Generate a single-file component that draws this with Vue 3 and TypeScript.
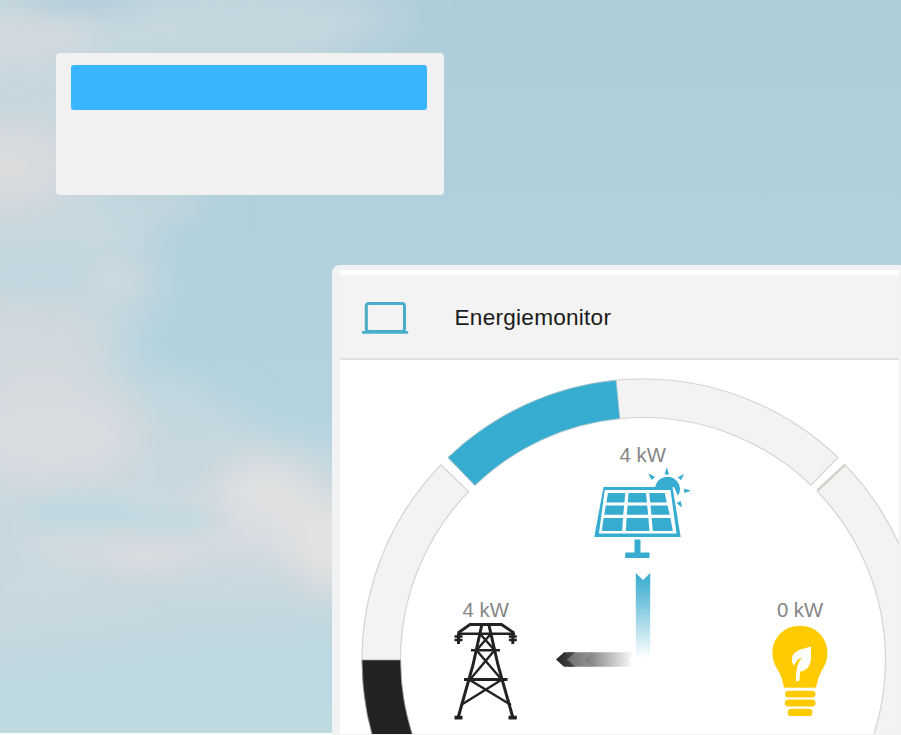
<script setup lang="ts">
interface Segment { from: number; to: number; kind: string }
interface Reading { x: number; y: number; label: string }

const cx = 643
const cy = 660
const outer = 281
const inner = 242.5

function point(radius: number, deg: number): string {
  const a = (deg * Math.PI) / 180
  return `${(cx + radius * Math.cos(a)).toFixed(2)} ${(cy + radius * Math.sin(a)).toFixed(2)}`
}

function ring(s: Segment): string {
  return `M${point(outer, s.from)}A${outer} ${outer} 0 0 1 ${point(outer, s.to)}L${point(inner, s.to)}A${inner} ${inner} 0 0 0 ${point(inner, s.from)}Z`
}

const segments: Segment[] = [
  { from: 136, to: 224, kind: 'track' },
  { from: 136, to: 180, kind: 'grid' },
  { from: 226.1, to: 313.9, kind: 'track' },
  { from: 226.1, to: 264.5, kind: 'solar' },
  { from: 316, to: 404, kind: 'track' },
]

const readings: Reading[] = [
  { x: 642.7, y: 462, label: '4 kW' },
  { x: 485.7, y: 617, label: '4 kW' },
  { x: 800, y: 617, label: '0 kW' },
]
</script>

<template>
  <div class="page">
    <svg class="sky" viewBox="0 0 901 733" preserveAspectRatio="none" aria-hidden="true">
      <defs>
        <linearGradient id="air" x1="0" y1="0" x2="0" y2="1">
          <stop offset="0" stop-color="#aecdd9" />
          <stop offset=".5" stop-color="#b3d3de" />
          <stop offset=".8" stop-color="#bad7e0" />
          <stop offset="1" stop-color="#bfd9e1" />
        </linearGradient>
        <filter id="haze" x="-60%" y="-60%" width="220%" height="220%"><feGaussianBlur stdDeviation="20" /></filter>
        <filter id="wisp" x="-60%" y="-80%" width="220%" height="260%"><feGaussianBlur stdDeviation="10" /></filter>
      </defs>
      <rect width="901" height="734" fill="url(#air)" />
      <g filter="url(#haze)">
        <path d="M-60 -10L260 -20L420 10L300 70L110 75L120 190L220 205L140 235L170 285L130 330L130 370L220 400L270 440L370 455V625L200 635L100 650L-60 670Z" fill="#c6d7df" />
        <ellipse cx="10" cy="40" rx="75" ry="24" fill="#d4dadf" />
        <ellipse cx="10" cy="165" rx="60" ry="42" fill="#dadbdd" />
        <ellipse cx="20" cy="345" rx="85" ry="40" fill="#d1d9de" />
        <ellipse cx="50" cy="435" rx="95" ry="58" fill="#d7dce0" />
        <ellipse cx="190" cy="535" rx="170" ry="34" fill="#d5dce1" />
        <ellipse cx="268" cy="490" rx="50" ry="30" fill="#e2e2e2" />
        <ellipse cx="335" cy="545" rx="45" ry="44" fill="#e5e3e1" />
        <ellipse cx="30" cy="590" rx="80" ry="18" fill="#cbdae1" />
      </g>
      <g filter="url(#wisp)">
        <ellipse cx="85" cy="2" rx="60" ry="10" fill="#b2ced9" />
        <ellipse cx="235" cy="12" rx="45" ry="8" fill="#c0d4dd" opacity=".7" />
        <ellipse cx="40" cy="35" rx="45" ry="13" fill="#d2dadf" opacity=".7" />
        <ellipse cx="15" cy="92" rx="40" ry="15" fill="#c5d6de" opacity=".8" />
        <ellipse cx="170" cy="205" rx="40" ry="8" fill="#c6d5dd" opacity=".7" />
        <ellipse cx="40" cy="276" rx="55" ry="15" fill="#c0d5dd" opacity=".8" />
        <ellipse cx="115" cy="282" rx="28" ry="18" fill="#cfd9df" opacity=".6" />
        <ellipse cx="175" cy="395" rx="30" ry="24" fill="#c0d7df" opacity=".6" />
        <ellipse cx="85" cy="513" rx="62" ry="17" fill="#bdd8e0" />
        <ellipse cx="165" cy="520" rx="58" ry="10" fill="#bed8e0" />
        <ellipse cx="145" cy="560" rx="45" ry="14" fill="#dadde0" opacity=".6" />
        <ellipse cx="225" cy="588" rx="60" ry="8" fill="#c9dae1" opacity=".8" />
      </g>
    </svg>

    <nav class="menu"><div class="menu-active"></div></nav>

    <section class="panel">
      <header class="head">
        <svg class="laptop" width="48" height="36" viewBox="361 300 48 36" fill="none" stroke="#49adc9">
          <rect x="366.3" y="303.4" width="38.2" height="28" rx="2.6" stroke-width="3" />
          <path d="M363.2 332.4H407" stroke-width="2.6" stroke-linecap="round" />
        </svg>
        <h1>Energiemonitor</h1>
      </header>

      <svg class="monitor" viewBox="340 360 559 373.5">
        <defs>
          <linearGradient id="down" x1="0" y1="573" x2="0" y2="658" gradientUnits="userSpaceOnUse">
            <stop offset="0" stop-color="#38abcf" />
            <stop offset=".25" stop-color="#64bdd9" />
            <stop offset="1" stop-color="#fff" />
          </linearGradient>
          <linearGradient id="left" x1="585" y1="0" x2="634" y2="0" gradientUnits="userSpaceOnUse">
            <stop offset="0" stop-color="#777" />
            <stop offset="1" stop-color="#fff" />
          </linearGradient>
          <linearGradient id="tip" x1="556" y1="0" x2="578" y2="0" gradientUnits="userSpaceOnUse">
            <stop offset="0" stop-color="#222" />
            <stop offset="1" stop-color="#555" />
          </linearGradient>
          <linearGradient id="mid" x1="568" y1="0" x2="595" y2="0" gradientUnits="userSpaceOnUse">
            <stop offset="0" stop-color="#707070" />
            <stop offset="1" stop-color="#999" />
          </linearGradient>
        </defs>

        <path v-for="(s, i) in segments" :key="i" :d="ring(s)" :class="s.kind" />
        <path class="load-mark" d="M845.2 464.7L817 490.7" />
        <text v-for="(r, i) in readings" :key="i" :x="r.x" :y="r.y" class="reading">{{ r.label }}</text>

        <g class="solar-icon">
          <path d="M655 489A12.5 12.5 0 1 1 678 496L674 487Z" />
          <path d="M666.8 467L669 474.5H664.6ZM648.3 473.3L655 477L651.5 480ZM684.2 474L681 480.3L677.7 477.3ZM691 490.8L684.2 493V488.6ZM682.3 507.2L676.5 503.5L680.5 500.8Z" />
          <path d="M603.5 487H672.5L680.7 537H594.3Z" />
          <path d="M604.7 490H670.5L676.5 533.5H599Z" class="white" />
          <path d="M608 493H625.2L624.5 502.4H606.4ZM628.5 493H646L647 502.4H627.8ZM649.3 493H664.7L666.8 502.4H650.2ZM605.8 505.5H624.2L623.2 514.7H604.2ZM627.6 505.5H647.2L648.2 514.7H626.8ZM650.5 505.5H667.6L669.7 514.7H651.4ZM603.6 518H623L622.2 531H601.8ZM626.6 518H648.4L649.4 531H625.8ZM651.7 518H670.4L672.8 531H652.8Z" />
          <path d="M634.5 539.5H640.5V552.5H649.5V558H625.2V552.5H634.5Z" />
        </g>

        <path d="M635.8 573L643 580L650.2 573V658H635.8Z" fill="url(#down)" />
        <path d="M589 652.2H634L629 659.4L634 666.8H589L583 659.4Z" fill="url(#left)" />
        <path d="M568 652.2H592L585 659.4L592 666.8H568Z" fill="url(#mid)" />
        <path d="M556 659.4L564 652.2H575L567.5 659.4L575 666.8H564Z" fill="url(#tip)" />

        <g class="pylon">
          <path d="M458 633L470 624.5H501.5L514 633" stroke-width="2.8" />
          <path d="M457 633.8H515M471 650.3H500" stroke-width="2.6" />
          <path d="M464 679.5H507.5" stroke-width="3.2" />
          <path d="M482 624L473 665L458.3 717M488.7 624L498 665L512.7 717" stroke-width="3" />
          <path d="M480.2 634L494.6 650.3L470 679.5M490.7 634L476.5 650.3L501.5 679.5M469 679.5L511 705M502 679.5L461 705" stroke-width="2.4" />
          <path d="M454.5 717.7H462.5M508.5 717.7H516.8" stroke-width="3.8" />
          <path d="M458.5 633V644M512.8 633V644" stroke-width="3" />
          <path d="M454.5 636.5H462.5M454.5 640H462.5M508.8 636.5H516.8M508.8 640H516.8" stroke-width="2.3" />
        </g>

        <g class="bulb">
          <path d="M785.5 687.7C782.5 687.7 784 681 779 672C776.5 667.5 772.5 662 772.5 653C772.5 637 784.5 625.7 800 625.7S827.4 637 827.4 653C827.4 662 823.4 667.5 821 672C816.2 681 817.6 687.7 814.5 687.7Z" />
          <rect x="785" y="690.7" width="30.5" height="6.8" rx="3.4" />
          <rect x="784.8" y="699.5" width="30.7" height="7" rx="3.5" />
          <rect x="787.7" y="708.8" width="24.8" height="7.2" rx="3.6" />
          <path class="white" d="M811 646.5C805 648.5 795 649.3 792.3 656.5C791 660 792 663.5 794.3 665.7C795.4 661.6 798.7 658.3 802.6 657.6C797.6 661.2 796.4 668.7 795.8 680Q796.2 681.6 798 681.2Q799.3 681 799.5 679.7L800 671.5C806.5 671 810 666.5 810.9 659.5Z" />
        </g>
      </svg>
    </section>
  </div>
</template>

<style>
body { background: #fbfcfc; }
</style>

<style scoped>
.page {
  position: relative;
  box-sizing: border-box;
  height: 735px;
  padding: 53px 0 0 56px;
  overflow: hidden;
  font-family: "Liberation Sans", Arial, sans-serif;
}
.sky {
  position: absolute;
  inset: 0;
  width: 901px;
  height: 733px;
}
.menu {
  position: relative;
  box-sizing: border-box;
  width: 388px;
  height: 142px;
  padding: 11.5px 17.5px 0 15px;
  border-radius: 4px;
  background: #f1f1f1;
}
.menu-active {
  height: 45px;
  border-radius: 3px;
  background: #39b5ff;
}
.panel {
  position: relative;
  box-sizing: border-box;
  height: 470px;
  margin: 70px 0 0 276px;
  padding: 5px 2px 1.5px 8px;
  border-radius: 8px 0 0 0;
  background: #f1f2f4;
}
.head {
  box-sizing: border-box;
  display: flex;
  align-items: center;
  height: 90px;
  padding: 7px 0 0 21px;
  border-bottom: 2px solid #e0e0e0;
  background: linear-gradient(#fff 0, #fff 3px, #f3f3f3 7px);
}
.laptop { flex: none; }
h1 {
  margin: 1px 0 0 45.5px;
  color: #1a1a1a;
  font-size: 22.6px;
  font-weight: 400;
  line-height: 28px;
  letter-spacing: .25px;
}
.monitor {
  display: block;
  width: 559px;
  height: 373.5px;
  background: #fff;
}
.track { fill: #f3f3f3; stroke: #d3d3d3; stroke-width: 1.2; }
.grid { fill: #222; stroke: #999; stroke-width: .7; }
.solar { fill: #36acd1; stroke: #9ac3cd; stroke-width: .8; }
.load-mark { stroke: #d5d1c4; stroke-width: 2.4; }
.reading { fill: #858585; font-size: 20.3px; text-anchor: middle; }
.solar-icon { fill: #36acd1; }
.solar-icon .white, .bulb .white { fill: #fff; }
.pylon { fill: none; stroke: #222; }
.bulb { fill: #fecb00; }
</style>
